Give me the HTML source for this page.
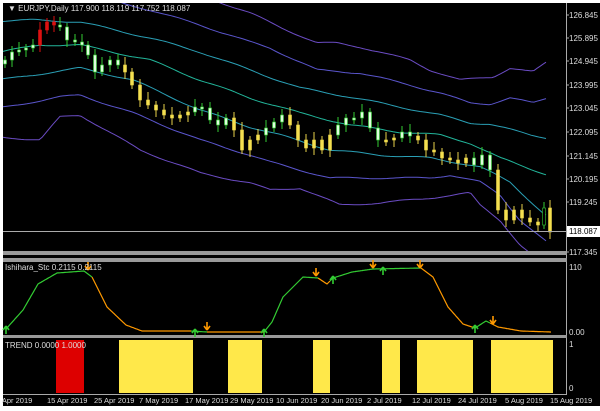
<!DOCTYPE html><html><head><meta charset="utf-8"><style>
body{margin:0;background:#fff;width:600px;height:406px;overflow:hidden;font-family:"Liberation Sans",sans-serif}
svg text{font-family:"Liberation Sans",sans-serif;font-size:8px;fill:#ddd}
#dates text{font-size:7.5px}
</style></head><body>
<svg id="s" width="600" height="406" xmlns="http://www.w3.org/2000/svg">
<defs><clipPath id="cp"><rect x="3" y="3" width="563" height="248"/></clipPath></defs>
<rect x="0" y="0" width="600" height="406" fill="#000"/>
<rect x="0" y="0" width="600" height="3" fill="#fff"/>
<rect x="0" y="0" width="3" height="406" fill="#fff"/>
<line x1="566.5" y1="3" x2="566.5" y2="394" stroke="#aaa"/>
<rect x="3" y="251" width="564" height="4" fill="#999"/>
<rect x="3" y="258" width="564" height="4" fill="#999"/>
<rect x="3" y="335" width="564" height="3" fill="#999"/>
<line x1="3" y1="394.5" x2="567" y2="394.5" stroke="#aaa"/>
<g id="bands" clip-path="url(#cp)"></g><g id="candles"></g>
<line x1="3" y1="231.5" x2="566" y2="231.5" stroke="#aaa" stroke-width="1"/>
<rect x="567" y="226" width="33" height="11" fill="#fff"/>
<text x="569" y="234" style="fill:#000">118.087</text>
<g id="ax"></g>
<text x="8" y="11">▼ EURJPY,Daily  117.900 118.119 117.752 118.087</text>
<g id="trend"></g>
<g id="stc"></g>
<text x="5" y="270">Ishihara_Stc 0.2115 0.2115</text>
<text x="5" y="348">TREND 0.0000 1.0000</text>
<text x="569" y="270">110</text><text x="569" y="335">0.00</text>
<text x="569" y="347">1</text><text x="569" y="391">0</text>
<g id="dates"></g>
</svg>
<script>
var NS="http://www.w3.org/2000/svg";
function el(p,t,a){var e=document.createElementNS(NS,t);for(var k in a)e.setAttribute(k,a[k]);document.getElementById(p).appendChild(e);return e;}
function txt(p,x,y,s){var e=el(p,"text",{x:x,y:y});e.textContent=s;}
var pl=[["126.845",15],["125.895",38],["124.945",61],["123.995",85],["123.045",108],["122.095",132],["121.145",156],["120.195",179],["119.245",202],["117.345",252]];
pl.forEach(function(p){txt("ax",569,p[1]+3,p[0]);el("ax","line",{x1:566,y1:p[1],x2:569,y2:p[1],stroke:"#aaa"});});
function interp(pts,x){if(x<=pts[0][0])return pts[0][1];for(var i=0;i<pts.length-1;i++){if(x<=pts[i+1][0]){var t=(x-pts[i][0])/(pts[i+1][0]-pts[i][0]);return pts[i][1]+t*(pts[i+1][1]-pts[i][1]);}}return pts[pts.length-1][1];}
var L=[
[[0,-36],[80,-30],[150,-15],[200,-5],[250,13],[280,27],[317,43],[337,43],[360,47],[410,60],[430,70],[460,80],[493,77],[510,68],[533,72],[547,62]],
[[0,-7],[80,-7],[150,10],[200,25],[250,42],[270,48],[317,70],[360,73],[410,85],[440,93],[470,103],[490,104],[510,98],[533,103],[547,98]],
[[0,21],[35,20],[80,22],[150,38],[200,52],[250,70],[300,88],[350,97],[400,107],[440,115],[470,123],[490,124],[530,135],[548,138]],
[[0,52],[40,45],[80,45],[150,60],[200,80],[250,98],[300,113],[350,125],[400,132],[440,135],[470,143],[500,158],[548,175]],
[[0,80],[80,68],[133,80],[200,110],[250,127],[280,135],[330,150],[380,155],[430,158],[470,165],[480,167],[510,182],[545,215]],
[[0,108],[60,97],[80,95],[133,113],[200,140],[250,155],[270,162],[330,178],[380,178],[430,178],[450,175],[480,182],[500,195],[520,220],[550,245]],
[[0,137],[40,140],[60,117],[80,115],[140,150],[200,173],[250,183],[270,190],[300,188],[340,205],[380,203],[430,198],[470,193],[480,205],[500,220],[520,245],[540,262]]];
var cols=["#6b4cc4","#5a55cc","#2a9fb5","#22b59a","#2a9fb5","#5a55cc","#6b4cc4"];
L.forEach(function(pts,k){var d="";for(var x=3;x<=548;x+=3){var y=interp(pts,x)+Math.sin(x/11+k)*0.8;d+=(x==3?"M":"L")+x+" "+y.toFixed(1);}el("bands","path",{d:d,fill:"none",stroke:cols[k],"stroke-width":1});});
var c=[[5,60],[12,52],[19,50],[26,48],[33,45],[40,30],[47,22],[54,25],[60,27],[67,40],[75,42],[82,45],[88,55],[95,72],[102,65],[110,60],[118,65],[125,72],[132,85],[140,100],[148,105],[156,110],[164,115],[172,118],[180,115],[188,112],[195,107],[202,108],[210,120],[218,125],[226,118],[234,130],[242,150],[250,140],[258,135],[266,128],[274,122],[282,115],[290,125],[298,140],[306,148],[314,140],[322,150],[330,135],[338,125],[346,118],[354,118],[362,112],[370,128],[378,140],[386,140],[394,138],[402,132],[410,136],[418,140],[426,150],[434,152],[442,158],[450,160],[458,163],[466,158],[474,165],[482,155],[490,170],[498,210],[506,220],[514,210],[522,218],[530,222],[538,225],[544,208],[550,232]];
var yel=[[119,193],[228,262],[313,330],[382,400],[417,473],[491,553]];
var cyel=[[119,193],[228,262],[290,330],[382,400],[417,473],[491,553]];
for(var i=0;i<c.length;i++){var x=c[i][0],cl=c[i][1],op=i?c[i-1][1]:64;
var col="#3c3",body="#dfd";
if(x>=38&&x<=58){col="#d11";body="#d11";}
else{for(var j=0;j<cyel.length;j++)if(x>=cyel[j][0]&&x<=cyel[j][1]){col="#e8d24a";body="#f5e050";}}
if(x>=540&&x<=546){col="#3c3";body="#000";}
var t=Math.min(op,cl),b=Math.max(op,cl);if(b-t<2)b=t+2;
el("candles","line",{x1:x,y1:t-4-(i%3)*2,x2:x,y2:b+4+(i%2)*3,stroke:col});
el("candles","rect",{x:x-1.5,y:t,width:3,height:b-t,fill:body,stroke:col,"stroke-width":0.6});}
el("trend","rect",{x:56,y:340,width:28,height:53,fill:"#d00"});
yel.forEach(function(r){el("trend","rect",{x:r[0],y:340,width:r[1]-r[0],height:53,fill:"#ffe84a"});});
var sp2=[[6,329],[23,310],[38,284],[57,273],[84,271],[92,277],[107,307],[126,325],[142,331],[191,331],[207,332],[264,332],[272,322],[283,297],[303,277],[318,278],[327,284],[333,278],[352,272],[373,269],[421,268],[433,277],[448,307],[463,324],[475,328],[486,321],[498,327],[521,331],[551,332]];
var segs=[[6,92,"#3c3"],[92,191,"#f90"],[191,207,"#3c3"],[207,264,"#f90"],[264,318,"#3c3"],[318,330,"#f90"],[330,421,"#3c3"],[421,475,"#f90"],[475,490,"#3c3"],[490,551,"#f90"]];
segs.forEach(function(s){var d="";for(var x=s[0];x<=s[1];x+=1){d+=(x==s[0]?"M":"L")+x+" "+interp(sp2,x).toFixed(1);}el("stc","path",{d:d,fill:"none",stroke:s[2],"stroke-width":1.2});});
function arr(x,y,up,col){var d=up?"M"+x+" "+(y-6)+"L"+(x-3)+" "+(y-2)+"M"+x+" "+(y-6)+"L"+(x+3)+" "+(y-2)+"M"+x+" "+(y-6)+"L"+x+" "+(y+2):"M"+x+" "+(y+2)+"L"+(x-3)+" "+(y-2)+"M"+x+" "+(y+2)+"L"+(x+3)+" "+(y-2)+"M"+x+" "+(y+2)+"L"+x+" "+(y-6);el("stc","path",{d:d,fill:"none",stroke:col,"stroke-width":1.6});}
[[6,332],[195,335],[264,335],[333,282],[383,273],[475,331]].forEach(function(p){arr(p[0],p[1],true,"#3c3");});
[[88,268],[207,328],[316,274],[373,266],[420,266],[493,322]].forEach(function(p){arr(p[0],p[1],false,"#f90");});
var ds=[[-4,"1 Apr 2019"],[47,"15 Apr 2019"],[94,"25 Apr 2019"],[139,"7 May 2019"],[185,"17 May 2019"],[230,"29 May 2019"],[276,"10 Jun 2019"],[321,"20 Jun 2019"],[367,"2 Jul 2019"],[412,"12 Jul 2019"],[458,"24 Jul 2019"],[505,"5 Aug 2019"],[550,"15 Aug 2019"]];
ds.forEach(function(d){txt("dates",d[0],403,d[1]);});
</script>
</body></html>
